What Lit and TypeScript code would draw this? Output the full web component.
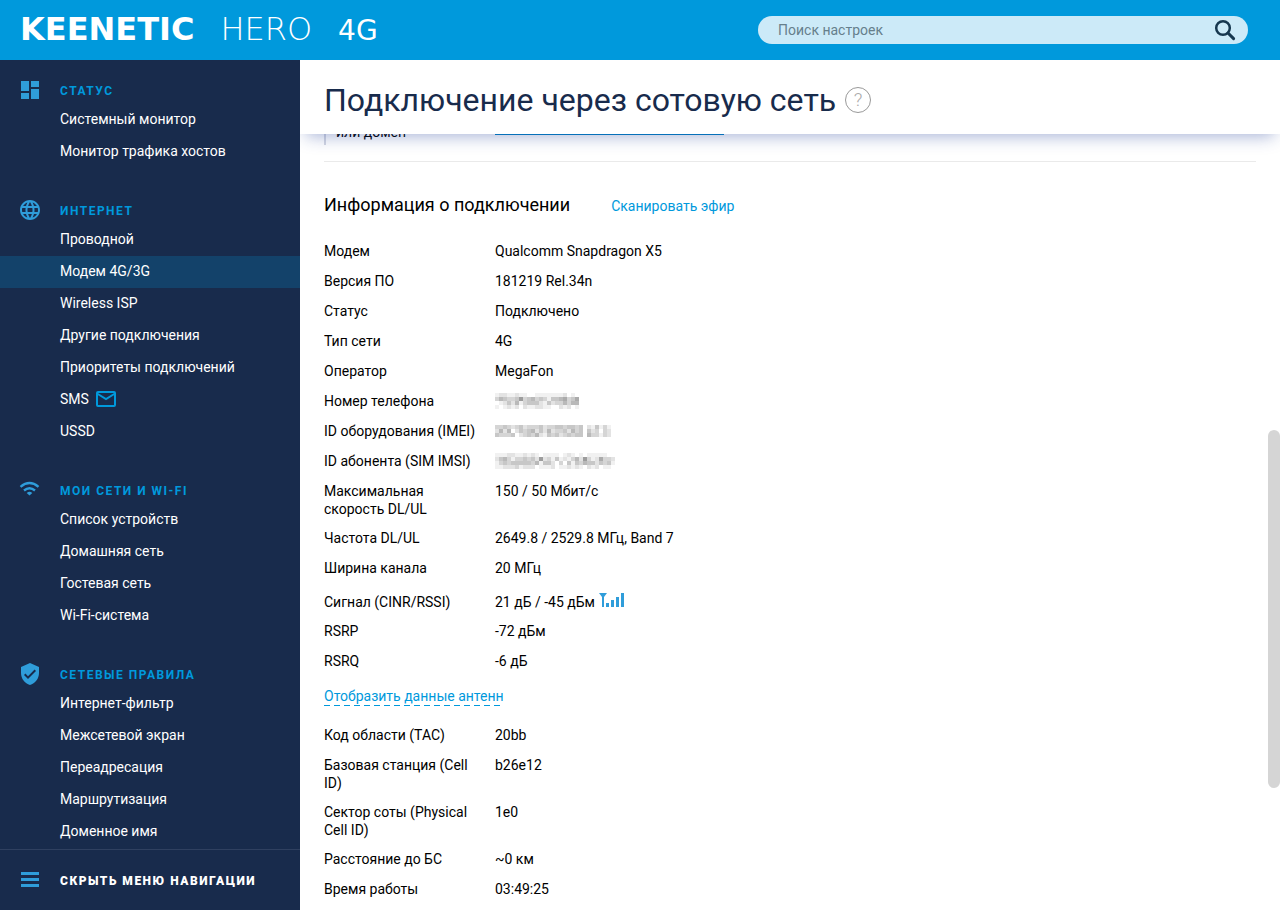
import { LitElement, html, css, svg } from "lit";
import { customElement } from "lit/decorators.js";

interface Section { title: string; icon: string; items: string[]; }

const sections: Section[] = [
  { title: "Статус", icon: "dashboard", items: ["Системный монитор", "Монитор трафика хостов"] },
  { title: "Интернет", icon: "globe", items: ["Проводной", "Модем 4G/3G", "Wireless ISP", "Другие подключения", "Приоритеты подключений", "SMS", "USSD"] },
  { title: "Мои сети и Wi-Fi", icon: "wifi", items: ["Список устройств", "Домашняя сеть", "Гостевая сеть", "Wi-Fi-система"] },
  { title: "Сетевые правила", icon: "shield", items: ["Интернет-фильтр", "Межсетевой экран", "Переадресация", "Маршрутизация", "Доменное имя"] },
];

const icons: Record<string, string> = {
  dashboard: "M3 3h8v10H3zM13 3h8v6h-8zM3 15h8v6H3zM13 11h8v10h-8z",
  globe: "M11.99 2C6.47 2 2 6.48 2 12s4.47 10 9.99 10C17.52 22 22 17.52 22 12S17.52 2 11.99 2zm6.93 6h-2.95c-.32-1.25-.78-2.45-1.38-3.56 1.84.63 3.37 1.91 4.33 3.56zM12 4.04c.83 1.2 1.48 2.53 1.91 3.96h-3.82c.43-1.43 1.08-2.76 1.91-3.96zM4.26 14C4.1 13.36 4 12.69 4 12s.1-1.36.26-2h3.38c-.08.66-.14 1.32-.14 2s.06 1.34.14 2H4.26zm.82 2h2.95c.32 1.25.78 2.45 1.38 3.56-1.84-.63-3.37-1.9-4.33-3.56zm2.95-8H5.08c.96-1.66 2.49-2.93 4.33-3.56C8.81 5.55 8.35 6.75 8.03 8zM12 19.96c-.83-1.2-1.48-2.53-1.91-3.96h3.82c-.43 1.43-1.08 2.76-1.91 3.96zM14.34 14H9.66c-.09-.66-.16-1.32-.16-2s.07-1.35.16-2h4.68c.09.65.16 1.32.16 2s-.07 1.34-.16 2zm.25 5.56c.6-1.11 1.06-2.31 1.38-3.56h2.95c-.96 1.65-2.49 2.93-4.33 3.56zM16.36 14c.08-.66.14-1.32.14-2s-.06-1.34-.14-2h3.38c.16.64.26 1.31.26 2s-.1 1.36-.26 2h-3.38z",
  shield: "M12 1L3 5v6c0 5.55 3.84 10.74 9 12 5.16-1.26 9-6.45 9-12V5l-9-4zm-2 16l-4-4 1.41-1.41L10 14.17l6.59-6.59L18 9l-8 8z",
};

const info: [string, string][] = [
  ["Модем", "Qualcomm Snapdragon X5"],
  ["Версия ПО", "181219 Rel.34n"],
  ["Статус", "Подключено"],
  ["Тип сети", "4G"],
  ["Оператор", "MegaFon"],
  ["Номер телефона", "mask:0"],
  ["ID оборудования (IMEI)", "mask:1"],
  ["ID абонента (SIM IMSI)", "mask:2"],
  ["Максимальная скорость DL/UL", "150 / 50 Мбит/с"],
  ["Частота DL/UL", "2649.8 / 2529.8 МГц, Band 7"],
  ["Ширина канала", "20 МГц"],
  ["Сигнал (CINR/RSSI)", "21 дБ / -45 дБм"],
  ["RSRP", "-72 дБм"],
  ["RSRQ", "-6 дБ"],
];

const cell: [string, string][] = [
  ["Код области (TAC)", "20bb"],
  ["Базовая станция (Cell ID)", "b26e12"],
  ["Сектор соты (Physical Cell ID)", "1e0"],
  ["Расстояние до БС", "~0 км"],
  ["Время работы", "03:49:25"],
];

/* Shade of every 4px block of a hidden value: 0 is white, 9 the darkest. */
const masks = [
  ["122112110011111112010", "354334734534314456346", "012425134442142335355", "101212021122110021201"],
  ["334323423334233443443402141310", "252502434524252334253404230320", "433340234352143423434405331320"],
  ["111221121210111101210101111100", "245313343427231412135273126332", "134344444351442030414354424341", "112223122201112011212102120110"],
];

@customElement("app-root")
export class AppRoot extends LitElement {
  static styles = css`
    :host { display: flex; flex-direction: column; height: 100vh; overflow: hidden; font-family: Roboto, "Open Sans", sans-serif; font-size: 14px; line-height: 18px; color: #000; background: #fff; }
    * { box-sizing: border-box; }
    a { text-decoration: none; color: inherit; }
    ul { list-style: none; margin: 0; padding: 0; }
    svg { display: block; }
    .top { flex: none; height: 60px; background: #0099dc; display: flex; align-items: center; justify-content: space-between; padding: 0 32px 0 20px; }
    .logo { display: flex; align-items: baseline; gap: 26px; color: #fff; font-family: "DejaVu Sans", sans-serif; font-size: 32px; line-height: 32px; }
    .brand { font-weight: 700; }
    .model { font-weight: 200; }
    .suffix { font-size: 28px; }
    .search { width: 490px; height: 28px; border-radius: 14px; background: #cceaf8; display: flex; align-items: center; padding: 0 11px 0 20px; }
    .search input { flex: 1; min-width: 0; border: 0; outline: 0; padding: 0; background: none; font: inherit; color: #16374f; }
    .search input::placeholder { color: #667f8c; opacity: 1; }
    .search button { border: 0; background: none; padding: 0; color: #16374f; }
    .body { flex: 1; min-height: 0; display: flex; }
    .side { width: 300px; flex: none; background: #182b4c; color: #fff; display: flex; flex-direction: column; }
    .nav { flex: 1; min-height: 0; overflow: hidden; padding-top: 18px; }
    .section { padding-bottom: 30px; }
    .section:last-child { padding-bottom: 0; }
    .head { height: 26px; display: flex; align-items: flex-start; gap: 18px; padding-left: 18px; margin: 0; font-size: 12px; font-weight: 700; letter-spacing: 1.5px; text-transform: uppercase; color: #0099dc; }
    .head svg, .toggle svg { color: #2f9dda; flex: none; }
    .head span { padding-top: 4px; }
    .item { height: 32px; display: flex; align-items: center; gap: 5px; padding: 0 0 2px 60px; }
    .item svg { color: #0099dc; }
    .active { background: #13426a; }
    .toggle { flex: none; height: 61px; width: 100%; border: 0; border-top: 1px solid #2f4060; background: none; color: #fff; display: flex; align-items: center; gap: 18px; padding: 0 18px; font: 900 12px/18px Roboto, sans-serif; letter-spacing: 1.5px; text-transform: uppercase; }
    .toggle span { padding-top: 2px; }
    .main { flex: 1; min-width: 0; position: relative; display: flex; flex-direction: column; }
    .title { flex: none; height: 74px; display: flex; align-items: center; gap: 9px; padding: 6px 24px 0; background: #fff; box-shadow: 0 8px 16px -6px rgba(30, 60, 150, 0.4); clip-path: inset(0 0 -30px 0); z-index: 1; }
    h1 { margin: 0; font-size: 32px; line-height: 40px; font-weight: 400; color: #182b4c; }
    .help { width: 26px; height: 26px; border: 1px solid #999; border-radius: 50%; background: none; padding: 0; color: #aaa; font: 300 19px/24px Roboto, sans-serif; }
    .content { flex: 1; min-height: 0; overflow: hidden; padding: 0 24px; }
    .host { display: grid; grid-template-columns: 171px 1fr; align-items: start; height: 28px; border-bottom: 1px solid #eaeaea; }
    .hostlabel { height: 11px; border-left: 2px solid #d4d7e2; padding: 0 0 4px 10px; display: flex; align-items: flex-end; }
    .hostline { width: 229px; height: 1px; background: #0080c4; }
    .caption { display: flex; align-items: center; gap: 41px; padding: 31px 0 25px; }
    h2 { margin: 0; font-size: 18px; line-height: 24px; font-weight: 400; }
    .link { color: #0099dc; padding-top: 2px; }
    dl { margin: 0; display: grid; gap: 12px; }
    .row { display: grid; grid-template-columns: 155px 1fr; column-gap: 16px; }
    dt, dd { margin: 0; }
    dt.nowrap { white-space: nowrap; }
    dd { display: flex; align-items: center; gap: 4px; }
    .tall dd { align-items: start; }
    .tall { margin-bottom: -1px; }
    .signal { padding-top: 4px; margin-bottom: -1px; }
    .antennas { display: inline-block; margin: 17px 0 20px; color: #0099dc; height: 19px; background: repeating-linear-gradient(90deg, #0099dc 0 6px, transparent 6px 10px) left bottom / 100% 1px no-repeat; }
    .thumb { position: absolute; right: 0; top: 370px; width: 12px; height: 358px; border-radius: 6px; background: #d5d5d5; }
  `;

  icon(name: string) {
    return name === "wifi"
      ? html`<svg width="24" height="24" viewBox="0 0 24 24" fill="none" stroke="currentColor" stroke-width="2.4"><path d="M2.5 8.8Q11.5 1.2 20.5 8.8M6 12.5Q11.5 7.9 17 12.5"/><path d="M8.7 14.9Q11.5 12.8 14.3 14.9L11.5 17.6z" fill="currentColor" stroke="none"/></svg>`
      : html`<svg width="24" height="24" viewBox="0 0 24 24" fill="currentColor"><path d=${icons[name]} /></svg>`;
  }

  mask(index: number) {
    const rows = masks[index];
    return html`<svg width=${rows[0].length * 4} height=${rows.length * 4} role="img" aria-label="Скрыто" shape-rendering="crispEdges">
      ${rows.map((row, y) => [...row].map((v, x) => svg`<rect x=${x * 4} y=${y * 4} width="4" height="4" fill=${`rgb(${[0, 1, 2].map(() => 255 - Number(v) * 14).join(",")})`}/>`))}
    </svg>`;
  }

  row([label, value]: [string, string]) {
    const signal = label.startsWith("Сигнал");
    return html`<div class="row ${signal ? "signal" : ""} ${label.length > 23 ? "tall" : ""}">
      <dt class=${label.length < 24 ? "nowrap" : ""}>${label}</dt>
      <dd>${value.startsWith("mask:") ? this.mask(Number(value[5])) : value}${signal
        ? html`<svg width="26" height="18" viewBox="0 0 26 18" fill="#2f9dda"><path d="M0 0h8L5 4v10H3V4zM7 10h3v4H7zM12 7h3v7h-3zM17 4h3v10h-3zM22 0h3v14h-3z"/></svg>` : ""}</dd>
    </div>`;
  }

  render() {
    return html`
      <header class="top">
        <div class="logo"><span class="brand">KEENETIC</span><span class="model">HERO</span><span class="suffix">4G</span></div>
        <form class="search" @submit=${(e: Event) => e.preventDefault()}>
          <input type="text" aria-label="Поиск настроек" placeholder="Поиск настроек">
          <button aria-label="Найти"><svg width="24" height="24" viewBox="0 0 24 24" fill="none" stroke="currentColor"><circle cx="10" cy="10" r="6.8" stroke-width="2.5"/><path d="M15 15l5.6 5.6" stroke-width="3" stroke-linecap="round"/></svg></button>
        </form>
      </header>
      <div class="body">
        <aside class="side">
          <nav class="nav">
            ${sections.map((s) => html`<section class="section">
              <h3 class="head">${this.icon(s.icon)}<span>${s.title}</span></h3>
              <ul>${s.items.map((i) => html`<li><a href="#" class="item ${i === "Модем 4G/3G" ? "active" : ""}">${i}${i === "SMS"
                ? html`<svg width="24" height="24" viewBox="0 0 24 24" fill="none" stroke="currentColor" stroke-width="2"><rect x="3" y="5" width="18" height="14" rx="1"/><path d="M3 6.5l9 5.5 9-5.5"/></svg>` : ""}</a></li>`)}</ul>
            </section>`)}
          </nav>
          <button class="toggle"><svg width="24" height="24" viewBox="0 0 24 24" fill="currentColor"><path d="M3 4h18v3H3zM3 10h18v3H3zM3 16h18v3H3z"/></svg><span>Скрыть меню навигации</span></button>
        </aside>
        <main class="main">
          <div class="title"><h1>Подключение через сотовую сеть</h1><button class="help" aria-label="Справка">?</button></div>
          <div class="content">
            <div class="host"><div class="hostlabel">или домен</div><div class="hostline"></div></div>
            <div class="caption"><h2>Информация о подключении</h2><a class="link" href="#">Сканировать эфир</a></div>
            <dl>${info.map((r) => this.row(r))}</dl>
            <a class="antennas" href="#">Отобразить данные антенн</a>
            <dl>${cell.map((r) => this.row(r))}</dl>
          </div>
          <div class="thumb"></div>
        </main>
      </div>`;
  }
}
